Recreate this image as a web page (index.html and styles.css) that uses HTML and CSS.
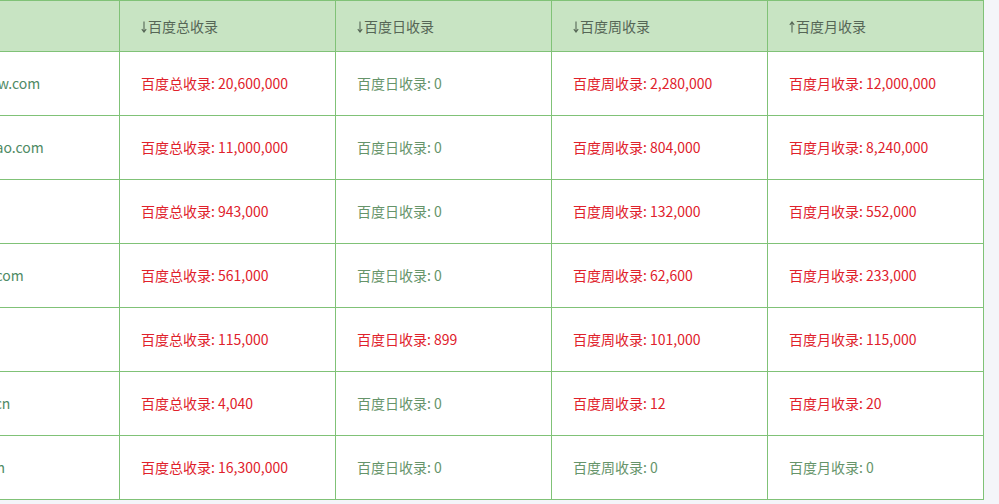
FILE: index.html
```html
<!DOCTYPE html>
<html lang="zh-CN">
<head>
<meta charset="utf-8">
<title>收录</title>
<link rel="stylesheet" href="styles.css">
</head>
<body>
<div class="wrap">
<table class="tbl">
<colgroup><col class="c"><col class="c"><col class="c"><col class="c"><col class="c"></colgroup>
<thead>
<tr>
<th></th>
<th><svg class="arr" viewBox="0 0 6 12" width="6" height="12"><path d="M3 0.5V11M0.8 8.2L3 11L5.2 8.2"/></svg>百度总收录</th>
<th><svg class="arr" viewBox="0 0 6 12" width="6" height="12"><path d="M3 0.5V11M0.8 8.2L3 11L5.2 8.2"/></svg>百度日收录</th>
<th><svg class="arr" viewBox="0 0 6 12" width="6" height="12"><path d="M3 0.5V11M0.8 8.2L3 11L5.2 8.2"/></svg>百度周收录</th>
<th><svg class="arr" viewBox="0 0 6 12" width="6" height="12"><path d="M3 11.5V1M0.8 3.8L3 1L5.2 3.8"/></svg>百度月收录</th>
</tr>
</thead>
<tbody>
<tr><td class="site">www.xinuaw.com</td><td class="hot">百度总收录: 20,600,000</td><td class="zero">百度日收录: 0</td><td class="hot">百度周收录: 2,280,000</td><td class="hot">百度月收录: 12,000,000</td></tr>
<tr><td class="site">www.itaohao.com</td><td class="hot">百度总收录: 11,000,000</td><td class="zero">百度日收录: 0</td><td class="hot">百度周收录: 804,000</td><td class="hot">百度月收录: 8,240,000</td></tr>
<tr><td class="site">www.jb.cn</td><td class="hot">百度总收录: 943,000</td><td class="zero">百度日收录: 0</td><td class="hot">百度周收录: 132,000</td><td class="hot">百度月收录: 552,000</td></tr>
<tr><td class="site">www.itme.com</td><td class="hot">百度总收录: 561,000</td><td class="zero">百度日收录: 0</td><td class="hot">百度周收录: 62,600</td><td class="hot">百度月收录: 233,000</td></tr>
<tr><td class="site">www.a.cn</td><td class="hot">百度总收录: 115,000</td><td class="hot">百度日收录: 899</td><td class="hot">百度周收录: 101,000</td><td class="hot">百度月收录: 115,000</td></tr>
<tr><td class="site">www.zxcb.cn</td><td class="hot">百度总收录: 4,040</td><td class="zero">百度日收录: 0</td><td class="hot">百度周收录: 12</td><td class="hot">百度月收录: 20</td></tr>
<tr><td class="site">www.abc.cn</td><td class="hot">百度总收录: 16,300,000</td><td class="zero">百度日收录: 0</td><td class="zero">百度周收录: 0</td><td class="zero">百度月收录: 0</td></tr>
</tbody>
</table>
</div>
</body>
</html>
```
FILE: styles.css
```css
html, body {
  margin: 0;
  padding: 0;
  background: #f4f5f9;
  overflow: hidden;
}
body {
  font-family: "Noto Sans CJK SC", "Noto Sans", sans-serif;
  font-size: 14px;
}
.wrap {
  width: 999px;
  height: 504px;
  overflow: hidden;
}
.tbl {
  margin-left: -97px;
  width: 1081px;
  table-layout: fixed;
  border-collapse: collapse;
  background: #fff;
}
.tbl .c {
  width: 216px;
}
.tbl th,
.tbl td {
  border: 1px solid #80c277;
  padding: 0 0 0 21px;
  text-align: left;
  white-space: nowrap;
  line-height: 20px;
}
.tbl th {
  height: 50px;
  background: #c8e4c3;
  color: #566656;
  font-weight: normal;
}
.tbl th .arr {
  display: inline-block;
  vertical-align: -1px;
  margin-right: 1px;
  fill: none;
  stroke: #566656;
  stroke-width: 1.1;
}
.tbl td {
  height: 61px;
  padding-bottom: 2px;
}
.tbl td.site {
  overflow: hidden;
  color: #4e8a64;
}
.tbl td.hot {
  color: #e0212b;
}
.tbl td.zero {
  color: #66946a;
}
```
